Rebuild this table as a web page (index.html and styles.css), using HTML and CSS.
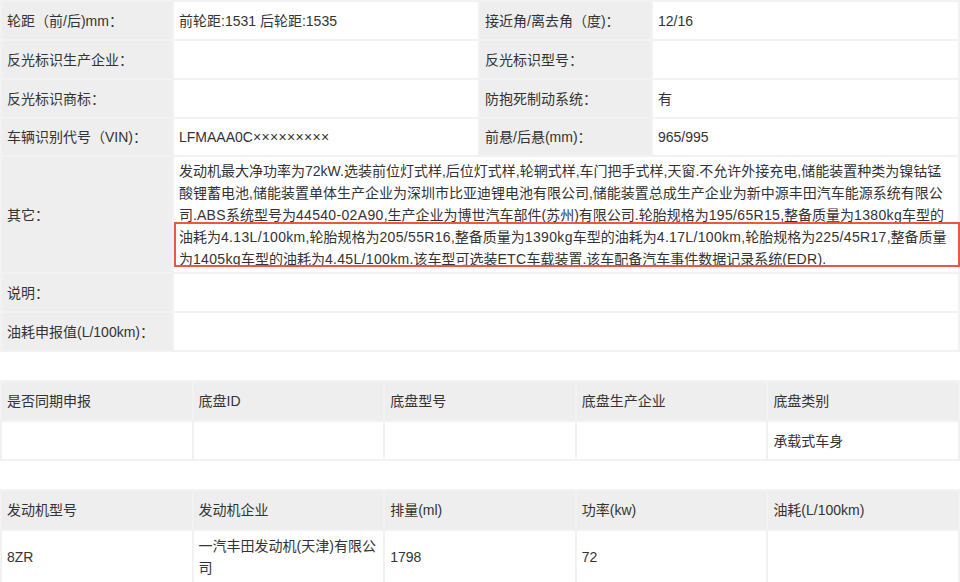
FILE: index.html
```html
<!DOCTYPE html>
<html lang="zh">
<head>
<meta charset="utf-8">
<title>车辆参数</title>
<link rel="stylesheet" href="styles.css">
</head>
<body>
<table class="spec">
  <colgroup>
    <col class="c-l1"><col class="c-v1"><col class="c-l2"><col class="c-v2">
  </colgroup>
  <tr class="r37">
    <td class="lbl">轮距（前/后)mm：</td>
    <td class="val">前轮距:1531 后轮距:1535</td>
    <td class="lbl">接近角/离去角（度)：</td>
    <td class="val">12/16</td>
  </tr>
  <tr class="r37">
    <td class="lbl">反光标识生产企业：</td>
    <td class="val"></td>
    <td class="lbl">反光标识型号：</td>
    <td class="val"></td>
  </tr>
  <tr class="r37">
    <td class="lbl">反光标识商标：</td>
    <td class="val"></td>
    <td class="lbl">防抱死制动系统：</td>
    <td class="val">有</td>
  </tr>
  <tr class="r36">
    <td class="lbl">车辆识别代号（VIN)：</td>
    <td class="val">LFMAAA0C<span class="en">×××××××××</span></td>
    <td class="lbl">前悬/后悬(mm)：</td>
    <td class="val">965/995</td>
  </tr>
  <tr class="tall">
    <td class="lbl">其它：</td>
    <td class="val other" colspan="3">发动机最大净功率为72kW.选装前位灯式样,后位灯式样,轮辋式样,车门把手式样,天窗.不允许外接充电,储能装置种类为镍钴锰<br>酸锂蓄电池,储能装置单体生产企业为深圳市比亚迪锂电池有限公司,储能装置总成生产企业为新中源丰田汽车能源系统有限公<br>司.<span class="en">ABS</span>系统型号为<span class="en">44540-02A90</span>,生产企业为博世汽车部件(苏州)有限公司.轮胎规格为<span class="en">195/65R15</span>,整备质量为<span class="en">1380kg</span>车型的<br>油耗为<span class="en">4.13L/100km</span>,轮胎规格为<span class="en">205/55R16</span>,整备质量为<span class="en">1390kg</span>车型的油耗为<span class="en">4.17L/100km</span>,轮胎规格为<span class="en">225/45R17</span>,整备质量<br>为<span class="en">1405kg</span>车型的油耗为<span class="en">4.45L/100km</span>.该车型可选装<span class="en">ETC</span>车载装置.该车配备汽车事件数据记录系统(<span class="en">EDR</span>).<div class="mark"></div></td>
  </tr>
  <tr class="r37">
    <td class="lbl">说明：</td>
    <td class="val" colspan="3"></td>
  </tr>
  <tr class="r37">
    <td class="lbl">油耗申报值(L/100km)：</td>
    <td class="val" colspan="3"></td>
  </tr>
</table>

<table class="grid">
  <tr class="head">
    <td>是否同期申报</td><td>底盘ID</td><td>底盘型号</td><td>底盘生产企业</td><td>底盘类别</td>
  </tr>
  <tr class="row">
    <td></td><td></td><td></td><td></td><td>承载式车身</td>
  </tr>
</table>

<table class="grid">
  <tr class="head">
    <td>发动机型号</td><td>发动机企业</td><td>排量(ml)</td><td>功率(kw)</td><td>油耗(L/100km)</td>
  </tr>
  <tr class="row">
    <td>8ZR</td><td>一汽丰田发动机(天津)有限公司</td><td>1798</td><td>72</td><td></td>
  </tr>
</table>
</body>
</html>
```

FILE: styles.css
```css
html, body {
  margin: 0;
  padding: 0;
  background: #ffffff;
}

body {
  width: 960px;
  font-family: "Liberation Sans", "Noto Sans CJK SC", sans-serif;
  font-size: 14px;
  color: #333333;
}

table {
  width: 960px;
  table-layout: fixed;
  border-collapse: separate;
  border-spacing: 2px;
  background: #f2f2f2;
}

td {
  padding: 0 5px;
  vertical-align: middle;
  line-height: 22px;
}

.c-l1 { width: 170px; }
.c-v1 { width: 304px; }
.c-l2 { width: 171px; }
.c-v2 { width: 305px; }

.spec tr.r37 td { height: 37px; }
.spec tr.r36 td { height: 36px; }
.spec tr.tall td { height: 113px; }

.lbl {
  background: #eeeeee;
  white-space: nowrap;
}

.val {
  background: #ffffff;
}

.other {
  position: relative;
  padding-top: 1px;
  padding-bottom: 1px;
  white-space: nowrap;
}

.en {
  letter-spacing: 0.33px;
}

.mark {
  position: absolute;
  left: 0;
  right: -2px;
  top: 65px;
  height: 41px;
  border: 2px solid #e9583f;
  pointer-events: none;
}

.grid {
  margin-top: 28px;
}

.grid .head td {
  height: 38px;
  background: #eeeeee;
}

.grid .row td {
  background: #ffffff;
  padding-top: 4px;
  padding-bottom: 4px;
  height: 29px;
}
```
